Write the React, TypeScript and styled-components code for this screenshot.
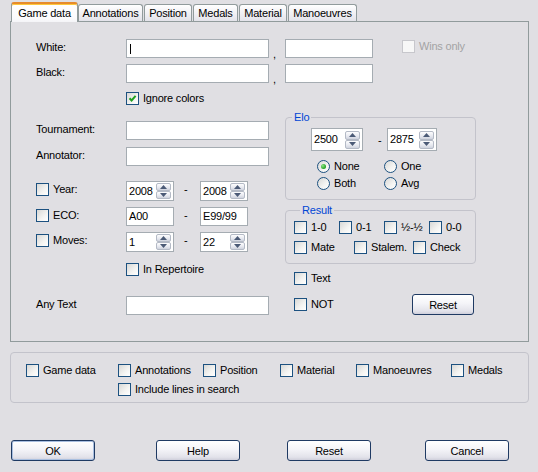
import React from 'react';
import styled, { createGlobalStyle, css } from 'styled-components';

const GlobalStyle = createGlobalStyle`
  html, body { margin: 0; padding: 0; }
  body {
    background: #e0dfe3;
    font-family: "Liberation Sans", Arial, sans-serif;
    font-size: 11px;
    letter-spacing: -0.2px;
    color: #000;
  }
`;

const Window = styled.div`
  width: 538px;
  height: 472px;
  box-sizing: border-box;
  padding: 2px 0 0 10px;
  background: #e0dfe3;
  overflow: hidden;
`;

const TabBar = styled.div`
  display: flex;
  align-items: flex-end;
  gap: 1px;
  height: 19px;
  padding-left: 1px;
  position: relative;
  z-index: 1;
`;

const Tab = styled.div<{ $w: number; $active?: boolean }>`
  box-sizing: border-box;
  width: ${p => p.$w}px;
  height: ${p => (p.$active ? 20 : 17)}px;
  margin-bottom: ${p => (p.$active ? -1 : 0)}px;
  margin-right: ${p => (p.$active ? -1 : 0)}px;
  border: 1px solid #919b9c;
  border-bottom: none;
  border-radius: 3px 3px 0 0;
  background: linear-gradient(#ffffff, #ecebf0 70%, #e3e3ea);
  display: flex;
  align-items: center;
  justify-content: center;
  line-height: 13px;
  white-space: nowrap;
  ${p =>
    p.$active &&
    css`
      background: linear-gradient(#ffffff, #fbfbfd 80%, #f4f4f7);
      border-top: 2px solid #e68b2c;
      box-shadow: inset 0 1px 0 #ffc83c;
      padding-top: 1px;
    `}
`;

const Panel = styled.div`
  box-sizing: border-box;
  width: 519px;
  height: 321px;
  border: 1px solid #919b9c;
  padding: 17px 0 0 25px;
`;

const Row = styled.div<{ $mt?: number; $center?: boolean }>`
  display: flex;
  align-items: ${p => (p.$center ? 'center' : 'flex-start')};
  margin-top: ${p => p.$mt ?? 0}px;
`;

const Label = styled.div<{ $w?: number }>`
  width: ${p => p.$w ?? 90}px;
  flex-shrink: 0;
  padding-top: 2px;
  line-height: 13px;
  white-space: nowrap;
`;

const Field = styled.div<{ $w: number; $h?: number }>`
  box-sizing: border-box;
  width: ${p => p.$w}px;
  height: ${p => p.$h ?? 19}px;
  flex-shrink: 0;
  border: 1px solid #a5acb2;
  background: #fff;
  padding: 0 2px 0 2px;
  display: flex;
  align-items: center;
  justify-content: space-between;
  line-height: 13px;
`;

const Caret = styled.span`
  width: 1px;
  height: 10px;
  margin-left: 1px;
  background: #000;
`;

const Comma = styled.span`
  width: 16px;
  flex-shrink: 0;
  align-self: flex-end;
  padding-left: 4px;
  box-sizing: border-box;
  line-height: 13px;
  transform: translateY(3px);
`;

const Dash = styled.span<{ $w: number; $pl: number }>`
  box-sizing: border-box;
  width: ${p => p.$w}px;
  padding-left: ${p => p.$pl}px;
  padding-top: 2px;
  flex-shrink: 0;
  line-height: 13px;
`;

const SpinButtons = styled.div`
  display: flex;
  flex-direction: column;
`;

const SpinBtn = styled.div<{ $h: number }>`
  box-sizing: border-box;
  width: 15px;
  height: ${p => p.$h}px;
  border: 1px solid #b4bac6;
  border-radius: 2px;
  background: linear-gradient(#fdfdfe, #e6e8ef 60%, #cfd3de);
  display: flex;
  align-items: center;
  justify-content: center;
`;

const Arrow = ({ up }: { up?: boolean }) => (
  <svg width="7" height="4" viewBox="0 0 7 4">
    <path d={up ? 'M0 4 L3.5 0 L7 4 Z' : 'M0 0 L3.5 4 L7 0 Z'} fill="#4b5a76" />
  </svg>
);

const Spin = ({ value, w, h = 20 }: { value: string; w: number; h?: number }) => {
  const bh = Math.floor((h - 4) / 2);
  return (
    <Field $w={w} $h={h}>
      <span>{value}</span>
      <SpinButtons>
        <SpinBtn $h={bh}>
          <Arrow up />
        </SpinBtn>
        <SpinBtn $h={bh}>
          <Arrow />
        </SpinBtn>
      </SpinButtons>
    </Field>
  );
};

const CheckItem = styled.label<{ $w?: number; $disabled?: boolean }>`
  display: inline-flex;
  align-items: center;
  gap: 4px;
  line-height: 13px;
  flex-shrink: 0;
  white-space: nowrap;
  width: ${p => (p.$w ? `${p.$w}px` : 'auto')};
  color: ${p => (p.$disabled ? '#a3a3a3' : '#000')};
`;

const Box = styled.span<{ $disabled?: boolean; $round?: boolean }>`
  box-sizing: border-box;
  width: 13px;
  height: 13px;
  flex-shrink: 0;
  border: 1px solid ${p => (p.$disabled ? '#c7c7cc' : '#1c5180')};
  border-radius: ${p => (p.$round ? '50%' : '0')};
  background: ${p =>
    p.$disabled ? '#f7f7f7' : 'linear-gradient(135deg, #d8d8d6 0%, #f4f4f2 60%, #ffffff 100%)'};
  display: flex;
  align-items: center;
  justify-content: center;
`;

const Dot = styled.span`
  width: 5px;
  height: 5px;
  border-radius: 50%;
  background: radial-gradient(circle at 35% 35%, #8ee486, #21a121 70%);
`;

const Check = ({
  label,
  checked,
  disabled,
  w,
}: {
  label: string;
  checked?: boolean;
  disabled?: boolean;
  w?: number;
}) => (
  <CheckItem $w={w} $disabled={disabled}>
    <Box $disabled={disabled}>
      {checked && (
        <svg width="9" height="9" viewBox="0 0 9 9">
          <path d="M1.5 4.2 L3.6 6.4 L7.6 1.8" stroke="#21a121" strokeWidth="2" fill="none" />
        </svg>
      )}
    </Box>
    {label}
  </CheckItem>
);

const Radio = ({ label, on, w }: { label: string; on?: boolean; w?: number }) => (
  <CheckItem $w={w}>
    <Box $round>{on && <Dot />}</Box>
    {label}
  </CheckItem>
);

const Columns = styled.div`
  display: flex;
  margin-top: 6px;
`;

const LeftCol = styled.div`
  width: 249px;
  flex-shrink: 0;
  padding-top: 10px;
`;

const RightCol = styled.div`
  width: 191px;
  flex-shrink: 0;
`;

const Group = styled.fieldset<{ $mt?: number; $pad: string }>`
  margin: ${p => p.$mt ?? 0}px 0 0 0;
  padding: ${p => p.$pad};
  border: 1px solid #c3c3cb;
  border-radius: 4px;
  min-width: 0;
`;

const Legend = styled.legend`
  margin-left: 6px;
  padding: 0 2px;
  line-height: 13px;
  color: #0046d5;
`;

const BottomGroup = styled.div`
  box-sizing: border-box;
  width: 519px;
  height: 51px;
  margin-top: 10px;
  border: 1px solid #c3c3cb;
  border-radius: 4px;
  padding: 11px 0 0 15px;
`;

const FootRow = styled.div`
  display: flex;
  margin-top: 37px;
  padding-left: 1px;
`;

const Button = styled.button<{ $w: number; $ml?: number; $default?: boolean }>`
  box-sizing: border-box;
  width: ${p => p.$w}px;
  height: 21px;
  margin-left: ${p => p.$ml ?? 0}px;
  flex-shrink: 0;
  padding: 0;
  border: 1px solid #1f3a63;
  border-radius: 3px;
  background: linear-gradient(#ffffff 0%, #f4f4f8 45%, #e2e2ea 85%, #cfcfdb 100%);
  font-family: "Liberation Sans", Arial, sans-serif;
  font-size: 11px;
  letter-spacing: -0.2px;
  color: #000;
  ${p =>
    p.$default &&
    css`
      box-shadow: inset 0 0 0 1px #a9bfe0;
    `}
`;

const tabs = [
  { name: 'Game data', w: 67, active: true },
  { name: 'Annotations', w: 65 },
  { name: 'Position', w: 48 },
  { name: 'Medals', w: 45 },
  { name: 'Material', w: 48 },
  { name: 'Manoeuvres', w: 69 },
];

export default function App() {
  return (
    <Window>
      <GlobalStyle />
      <TabBar>
        {tabs.map(t => (
          <Tab key={t.name} $w={t.w} $active={t.active}>
            {t.name}
          </Tab>
        ))}
      </TabBar>
      <Panel>
        <Row>
          <Label>White:</Label>
          <Field $w={143}>
            <Caret />
          </Field>
          <Comma>,</Comma>
          <Field $w={88} />
          <Row style={{ marginLeft: 29, marginTop: 1 }}>
            <Check label="Wins only" disabled />
          </Row>
        </Row>
        <Row $mt={6}>
          <Label>Black:</Label>
          <Field $w={143} />
          <Comma>,</Comma>
          <Field $w={88} />
        </Row>
        <Row $mt={9} style={{ paddingLeft: 90 }}>
          <Check label="Ignore colors" checked />
        </Row>

        <Columns>
          <LeftCol>
            <Row>
              <Label>Tournament:</Label>
              <Field $w={143} />
            </Row>
            <Row $mt={7}>
              <Label>Annotator:</Label>
              <Field $w={143} />
            </Row>
            <Row $mt={15}>
              <Label>
                <Check label="Year:" />
              </Label>
              <Spin value="2008" w={48} />
              <Dash $w={26} $pl={10}>-</Dash>
              <Spin value="2008" w={48} />
            </Row>
            <Row $mt={6}>
              <Label>
                <Check label="ECO:" />
              </Label>
              <Field $w={48}>A00</Field>
              <Dash $w={26} $pl={10}>-</Dash>
              <Field $w={48}>E99/99</Field>
            </Row>
            <Row $mt={6}>
              <Label>
                <Check label="Moves:" />
              </Label>
              <Spin value="1" w={48} />
              <Dash $w={26} $pl={10}>-</Dash>
              <Spin value="22" w={48} />
            </Row>
            <Row $mt={11} style={{ paddingLeft: 90 }}>
              <Check label="In Repertoire" />
            </Row>
            <Row $mt={20}>
              <Label>Any Text</Label>
              <Field $w={143} />
            </Row>
          </LeftCol>

          <RightCol>
            <Group $pad="4px 0 9px 0">
              <Legend>Elo</Legend>
              <Row $center style={{ paddingLeft: 25 }}>
                <Spin value="2500" w={52} h={23} />
                <Dash $w={24} $pl={15}>-</Dash>
                <Spin value="2875" w={50} h={23} />
              </Row>
              <Row $mt={9} style={{ paddingLeft: 31 }}>
                <Radio label="None" on w={67} />
                <Radio label="One" />
              </Row>
              <Row $mt={4} style={{ paddingLeft: 31 }}>
                <Radio label="Both" w={67} />
                <Radio label="Avg" />
              </Row>
            </Group>
            <Group $mt={4} $pad="4px 0 9px 8px">
              <Legend>Result</Legend>
              <Row>
                <Check label="1-0" w={45} />
                <Check label="0-1" w={45} />
                <Check label="½-½" w={45} />
                <Check label="0-0" />
              </Row>
              <Row $mt={7}>
                <Check label="Mate" w={60} />
                <Check label="Stalem." w={59} />
                <Check label="Check" />
              </Row>
            </Group>
            <Row $mt={8} style={{ paddingLeft: 9 }}>
              <Check label="Text" />
            </Row>
            <Row $mt={9} $center style={{ paddingLeft: 9, justifyContent: 'space-between', paddingRight: 2 }}>
              <Check label="NOT" />
              <Button $w={62}>Reset</Button>
            </Row>
          </RightCol>
        </Columns>
      </Panel>

      <BottomGroup>
        <Row>
          <Check label="Game data" w={92} />
          <Check label="Annotations" w={85} />
          <Check label="Position" w={77} />
          <Check label="Material" w={76} />
          <Check label="Manoeuvres" w={95} />
          <Check label="Medals" />
        </Row>
        <Row $mt={6} style={{ paddingLeft: 92 }}>
          <Check label="Include lines in search" />
        </Row>
      </BottomGroup>

      <FootRow>
        <Button $w={84} $default>OK</Button>
        <Button $w={84} $ml={61}>Help</Button>
        <Button $w={84} $ml={47}>Reset</Button>
        <Button $w={84} $ml={54}>Cancel</Button>
      </FootRow>
    </Window>
  );
}
